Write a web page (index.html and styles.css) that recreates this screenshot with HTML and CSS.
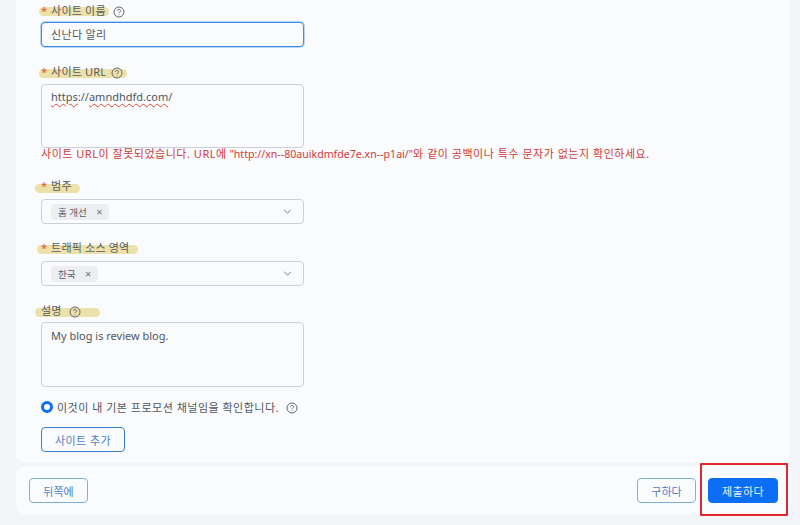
FILE: index.html
```html
<!DOCTYPE html>
<html lang="ko">
<head>
<meta charset="utf-8">
<title>사이트 추가</title>
<link rel="stylesheet" href="styles.css">
</head>
<body>
<div class="page">
  <main class="card">
    <div class="label lab-name"><i class="mark m-name"></i><span class="star">*</span> <span class="ltext">사이트 이름</span>
      <svg class="help" viewBox="0 0 12 12"><circle cx="6" cy="6" r="5"/><path d="M4.5 4.8a1.5 1.5 0 1 1 2.3 1.3c-.5.3-.8.6-.8 1.1"/><path d="M6 8.6v.6"/></svg></div>
    <input class="field focus" value="신난다 알리">
    <div class="label lab-url"><i class="mark m-url"></i><span class="star">*</span> <span class="ltext">사이트 URL</span>
      <svg class="help tight" viewBox="0 0 12 12"><circle cx="6" cy="6" r="5"/><path d="M4.5 4.8a1.5 1.5 0 1 1 2.3 1.3c-.5.3-.8.6-.8 1.1"/><path d="M6 8.6v.6"/></svg></div>
    <div class="area url-area"><span class="sq">https</span>://<span class="sq">amndhdfd.com</span>/</div>
    <div class="error"><span class="ko">사이트 URL이 잘못되었습니다. URL에</span> "http://xn--80auikdmfde7e.xn--p1ai/"<span class="ko">와 같이 공백이나 특수 문자가 없는지 확인하세요.</span></div>
    <div class="label lab-cat"><i class="mark m-cat"></i><span class="star">*</span> <span class="ltext">범주</span></div>
    <div class="select">
      <span class="tag">홈 개선 <span class="x">×</span></span>
      <svg class="chev" viewBox="0 0 10 6"><path d="M1 1l4 4 4-4"/></svg>
    </div>
    <div class="label lab-traffic"><i class="mark m-traffic"></i><span class="star">*</span> <span class="ltext">트래픽 소스 영역</span></div>
    <div class="select">
      <span class="tag">한국 <span class="x">×</span></span>
      <svg class="chev" viewBox="0 0 10 6"><path d="M1 1l4 4 4-4"/></svg>
    </div>
    <div class="label lab-desc"><i class="mark m-desc"></i><span class="ltext">설명</span>
      <svg class="help" viewBox="0 0 12 12"><circle cx="6" cy="6" r="5"/><path d="M4.5 4.8a1.5 1.5 0 1 1 2.3 1.3c-.5.3-.8.6-.8 1.1"/><path d="M6 8.6v.6"/></svg></div>
    <div class="area desc-area">My blog is review blog.</div>
    <div class="confirm"><span class="radio"></span><span>이것이 내 기본 프로모션 채널임을 확인합니다.</span>
      <svg class="help" viewBox="0 0 12 12"><circle cx="6" cy="6" r="5"/><path d="M4.5 4.8a1.5 1.5 0 1 1 2.3 1.3c-.5.3-.8.6-.8 1.1"/><path d="M6 8.6v.6"/></svg></div>
    <button class="btn add">사이트 추가</button>
  </main>
  <footer class="foot">
    <button class="btn back">뒤쪽에</button>
    <div class="actions">
      <button class="btn ask">구하다</button>
      <button class="btn primary">제출하다</button>
    </div>
    <i class="redbox"></i>
  </footer>
</div>
</body>
</html>
```

FILE: styles.css
```css
* { box-sizing: border-box; }
html, body { margin: 0; height: 100%; }
body {
  background: #f3f5f8;
  font-family: "Noto Sans", "Noto Sans CJK KR", sans-serif;
  font-size: 11px;
  color: #50565f;
  overflow: hidden;
}
.page { width: 800px; height: 525px; padding-left: 16px; padding-right: 10px; display: flex; flex-direction: column; }
.card {
  height: 463px;
  background: #fafbfc;
  border-radius: 0 0 10px 10px;
  padding: 0 0 0 25px;
  display: flex;
  flex-direction: column;
  align-items: flex-start;
}
.label {
  position: relative;
  height: 16px;
  line-height: 16px;
  display: flex;
  align-items: center;
  gap: 4px;
  color: #565c65;
  white-space: nowrap;
  z-index: 0;
}
.ltext { letter-spacing: .2px; }
.star { color: #e5532d; }
.mark {
  position: absolute;
  z-index: -1;
  background: #ece1aa;
  border-radius: 6px;
  height: 9px;
}
.m-name { left: -2px; top: 4px; width: 70px; }
.m-url { left: -2px; top: 5px; width: 88px; }
.m-cat { left: -6px; top: 6px; width: 45px; }
.m-traffic { left: -4px; top: 5px; width: 101px; }
.m-desc { left: -6px; top: 5px; width: 65px; }
.lab-name { margin-top: 3px; }
.lab-url { margin-top: 17px; }
.lab-cat { margin-top: 16px; }
.lab-traffic { margin-top: 16px; }
.lab-desc { margin-top: 17px; }
.help { width: 12px; height: 12px; fill: none; stroke: #5f6670; stroke-width: 1; margin-left: 3px; margin-top: 2px; flex: none; }
.help.tight { margin-left: 1px; }
.field {
  width: 263px;
  height: 25px;
  margin-top: 3px;
  padding: 0 9px 1px;
  background: #fafbfc;
  border: 1px solid #c9ced9;
  border-radius: 4px;
  font: inherit;
  letter-spacing: .35px;
  color: #50565f;
  outline: none;
}
.focus { border-color: #3d8be8; box-shadow: 0 0 0 1px #b9d5f5; }
.area {
  width: 263px;
  margin-top: 4px;
  padding: 4px 9px;
  line-height: 16px;
  border: 1px solid #cdd0da;
  border-radius: 4px;
  color: #50565f;
}
.url-area { height: 64px; }
.desc-area { height: 65px; margin-top: 3px; padding-top: 5px; }
.sq { text-decoration: underline wavy #e0453a; text-decoration-thickness: 1px; text-underline-offset: 2px; }
.error { color: #cf3a3a; margin-top: -2px; height: 16px; line-height: 16px; white-space: nowrap; font-size: 10.6px; }
.ko { font-size: 11px; letter-spacing: .52px; }
.select {
  position: relative;
  width: 263px;
  height: 25px;
  margin-top: 5px;
  padding: 3px 9px;
  border: 1px solid #cdd0da;
  border-radius: 4px;
  display: flex;
  align-items: center;
}
.tag {
  height: 16px;
  line-height: 16px;
  padding: 0 7px;
  background: #eceef1;
  border-radius: 4px;
  font-size: 9.5px;
  color: #555d68;
  white-space: nowrap;
}
.x { margin-left: 7px; font-size: 11px; color: #6b7280; }
.chev { width: 9px; height: 5px; margin-left: auto; margin-right: 2px; fill: none; stroke: #6b7280; stroke-width: 1.1; }
.confirm { display: flex; align-items: center; margin-top: 12px; height: 16px; white-space: nowrap; letter-spacing: .5px; }
.radio { width: 12px; height: 12px; border-radius: 50%; border: 3px solid #0b6ff0; background: #fff; margin-right: 4px; }
.confirm .help { margin-left: 7px; margin-top: 1px; }
.btn {
  font: inherit;
  height: 25px;
  border-radius: 4px;
  background: #fafbfc;
  border: 1px solid #3c82c8;
  color: #4f7fc4;
  padding: 0;
}
.add { width: 84px; margin-top: 12px; letter-spacing: .4px; }
.foot {
  position: relative;
  margin-top: 3px;
  height: 49px;
  background: #fafbfc;
  border-radius: 10px;
  padding: 0 12px 0 13px;
  display: flex;
  align-items: center;
  justify-content: space-between;
}
.back { width: 59px; border-color: #7fb0dc; }
.actions { display: flex; gap: 12px; }
.ask { width: 59px; border-color: #7fb0dc; }
.primary { width: 70px; background: #0b6ff5; border-color: #0b6ff5; color: #e8f1ff; letter-spacing: .4px; }
.redbox {
  position: absolute;
  left: 684px;
  top: -3px;
  width: 88px;
  height: 53px;
  border: 2px solid #e3252f;
  border-radius: 1px;
}
```
